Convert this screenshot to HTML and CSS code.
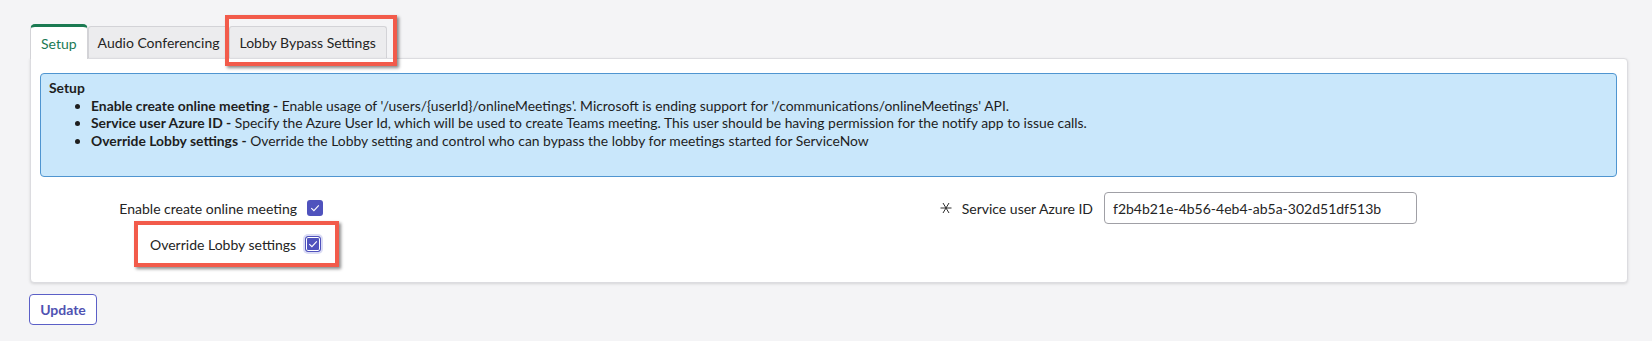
FILE: index.html
```html
<!DOCTYPE html>
<html>
<head>
<meta charset="utf-8">
<link rel="stylesheet" href="styles.css">
</head>
<body>
<div class="page">
  <div class="tabs">
    <div class="tab active">Setup</div>
    <div class="tab audio">Audio Conferencing</div>
    <div class="tab lobby">Lobby Bypass Settings<span class="mark mark-tab"></span></div>
  </div>
  <div class="panel">
    <div class="info">
      <div class="info-title">Setup</div>
      <ul class="info-list">
        <li><b>Enable create online meeting -</b> Enable usage of '/users/{userId}/onlineMeetings'. Microsoft is ending support for '/communications/onlineMeetings' API.</li>
        <li><b>Service user Azure ID -</b> Specify the Azure User Id, which will be used to create Teams meeting. This user should be having permission for the notify app to issue calls.</li>
        <li><b>Override Lobby settings -</b> Override the Lobby setting and control who can bypass the lobby for meetings started for ServiceNow</li>
      </ul>
    </div>
    <div class="form">
      <div class="col col-left">
        <div class="row">
          <label class="label">Enable create online meeting</label>
          <span class="check"><svg width="16" height="16" viewBox="0 0 16 16"><path d="M4.3 8.2 L6.9 10.7 L11.8 5.3" fill="none" stroke="#fff" stroke-width="1.1"/></svg></span>
        </div>
        <div class="row">
          <div class="group">
            <label class="label label-inner">Override Lobby settings</label>
            <span class="check focus"><svg width="16" height="16" viewBox="0 0 16 16"><path d="M4.3 8.2 L6.9 10.7 L11.8 5.3" fill="none" stroke="#fff" stroke-width="1.1"/></svg></span>
            <span class="mark mark-row"></span>
          </div>
        </div>
      </div>
      <div class="col col-right">
        <div class="row">
          <label class="label label-right"><svg class="req" width="12" height="12" viewBox="0 0 12 12"><g stroke="#2e2e2e" stroke-width="1" fill="none"><line x1="0.5" y1="6" x2="11.5" y2="6"/><line x1="3" y1="1" x2="9" y2="11"/><line x1="9" y1="1" x2="3" y2="11"/></g></svg>Service user Azure ID</label>
          <input class="input" type="text" value="f2b4b21e-4b56-4eb4-ab5a-302d51df513b">
        </div>
      </div>
    </div>
  </div>
  <button class="btn">Update</button>
</div>
</body>
</html>
```
FILE: styles.css
```css
* { box-sizing: border-box; }
html, body { margin: 0; padding: 0; }
body {
  background: #f4f4f6;
  font-family: Lato, "Open Sans", "Liberation Sans", sans-serif;
  font-size: 14px;
  color: #242424;
}
.page {
  padding: 24px 24px 0 30px;
}
.tabs {
  display: flex;
  align-items: flex-end;
  height: 34px;
}
.tab {
  position: relative;
  height: 32px;
  padding: 0 9px;
  display: flex;
  align-items: center;
  background: #ececee;
  border: 1px solid #d3d3d7;
  border-bottom: none;
  border-radius: 3px 3px 0 0;
  color: #242424;
  white-space: nowrap;
}
.tab.active {
  height: 35px;
  margin-bottom: -1px;
  padding: 0 10px;
  background: #fff;
  color: #1a7a55;
  border-top: 3px solid #1b7a52;
  border-radius: 5px 5px 0 0;
  z-index: 2;
}
.tab.lobby { margin-left: 0; padding: 0 10px 0 9px; }
.mark {
  position: absolute;
  z-index: 10;
  border: 4px solid #f25b4b;
  box-shadow: 2px 2px 3px rgba(0,0,0,0.45);
  pointer-events: none;
}
.mark-tab { left: -5px; right: -11px; top: -12px; bottom: -8px; }
.panel {
  position: relative;
  background: #fff;
  border: 1px solid #dcdce0;
  border-radius: 0 4px 4px 4px;
  box-shadow: 0 1px 3px rgba(0,0,0,0.13);
  padding: 14px 10px 22px 9px;
}
.info {
  background: #c9e7fb;
  border: 1px solid #4f95d0;
  border-radius: 4px;
  padding: 5px 8px 27px 8px;
  font-size: 13.88px;
  line-height: 17.5px;
  color: #1e1e1e;
}
.info-title { font-weight: 700; }
.info-list {
  margin: 0;
  padding-left: 42px;
}
.info-list b { font-weight: 700; }
.form {
  display: flex;
  margin-top: 15px;
  margin-left: -9px;
  margin-right: -10px;
}
.col { flex: 1; display: flex; flex-direction: column; gap: 4px; }
.row {
  display: flex;
  align-items: center;
  height: 32px;
}
.label {
  width: 276px;
  text-align: right;
  padding-right: 10px;
  color: #242424;
}
.group {
  position: relative;
  display: flex;
  align-items: center;
  height: 32px;
  margin-left: 119px;
}
.label-inner { width: auto; padding-right: 9px; }
.mark-row { left: -16px; right: -18px; top: -7px; bottom: -7px; }
.check {
  width: 16px;
  height: 16px;
  border-radius: 3px;
  background: #4f52bd;
  display: inline-flex;
}
.check.focus {
  border: 1px solid #4f52bd;
  box-shadow: inset 0 0 0 1px #fff, 0 0 0 2px #dadbf4;
}
.check.focus svg { margin: -1px; }
.label-right {
  width: 275px;
  padding-right: 11px;
  display: flex;
  justify-content: flex-end;
  align-items: center;
  gap: 10px;
}
.req { flex: none; }
.input {
  width: 313px;
  height: 32px;
  border: 1px solid #a0a0a6;
  border-radius: 4px;
  padding: 0 8px;
  font-family: Lato, "Open Sans", "Liberation Sans", sans-serif;
  font-size: 14px;
  color: #242424;
  background: #fff;
}
.btn {
  margin-top: 11px;
  margin-left: -1px;
  height: 31px;
  width: 68px;
  background: #fff;
  border: 1px solid #5b5fc7;
  border-radius: 4px;
  color: #4f52b2;
  font-family: Lato, "Open Sans", "Liberation Sans", sans-serif;
  font-size: 14px;
  font-weight: 700;
  padding: 0;
}
```
